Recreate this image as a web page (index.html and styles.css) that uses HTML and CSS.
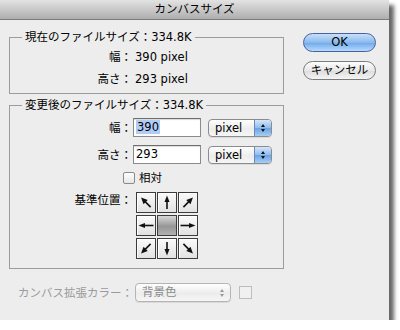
FILE: index.html
```html
<!DOCTYPE html>
<html lang="ja">
<head>
  <meta charset="utf-8">
  <title>カンバスサイズ</title>
  <link rel="stylesheet" href="styles.css">
</head>
<body>
  <div class="window">
    <div class="titlebar">カンバスサイズ</div>
    <div class="content">
      <div class="top">
        <div class="panels">
          <fieldset class="group current">
            <legend>現在のファイルサイズ：334.8K</legend>
            <div class="row"><span class="label">幅：</span><span class="value">390 pixel</span></div>
            <div class="row"><span class="label">高さ：</span><span class="value">293 pixel</span></div>
          </fieldset>
          <fieldset class="group resized">
            <legend>変更後のファイルサイズ：334.8K</legend>
            <div class="field">
              <span class="label">幅：</span>
              <div class="input"><span class="selected">390</span></div>
              <div class="select"><span>pixel</span><span class="stepper"><i class="up"></i><i class="down"></i></span></div>
            </div>
            <div class="field">
              <span class="label">高さ：</span>
              <div class="input">293</div>
              <div class="select"><span>pixel</span><span class="stepper"><i class="up"></i><i class="down"></i></span></div>
            </div>
            <div class="check"><span class="box"></span><span>相対</span></div>
            <div class="anchor">
              <span class="label">基準位置：</span>
              <div class="grid">
                <div class="cell"><svg viewBox="0 0 18 19"><g transform="rotate(-45 9 9.5)"><path d="M9 16V8" /><polygon points="9,2.5 6,9 12,9" /></g></svg></div>
                <div class="cell"><svg viewBox="0 0 18 19"><g><path d="M9 16V8" /><polygon points="9,2.5 6.5,9 11.5,9" /></g></svg></div>
                <div class="cell"><svg viewBox="0 0 18 19"><g transform="rotate(45 9 9.5)"><path d="M9 16V8" /><polygon points="9,2.5 6,9 12,9" /></g></svg></div>
                <div class="cell"><svg viewBox="0 0 18 19"><g transform="rotate(-90 9 9.5)"><path d="M9 17V8" /><polygon points="9,2 6.5,8.5 11.5,8.5" /></g></svg></div>
                <div class="cell center"></div>
                <div class="cell"><svg viewBox="0 0 18 19"><g transform="rotate(90 9 9.5)"><path d="M9 17V8" /><polygon points="9,2 6.5,8.5 11.5,8.5" /></g></svg></div>
                <div class="cell"><svg viewBox="0 0 18 19"><g transform="rotate(-135 9 9.5)"><path d="M9 16V8" /><polygon points="9,2.5 6,9 12,9" /></g></svg></div>
                <div class="cell"><svg viewBox="0 0 18 19"><g transform="rotate(180 9 9.5)"><path d="M9 16V8" /><polygon points="9,2.5 6.5,9 11.5,9" /></g></svg></div>
                <div class="cell"><svg viewBox="0 0 18 19"><g transform="rotate(135 9 9.5)"><path d="M9 16V8" /><polygon points="9,2.5 6,9 12,9" /></g></svg></div>
              </div>
            </div>
          </fieldset>
        </div>
        <div class="buttons">
          <div class="btn ok">OK</div>
          <div class="btn">キャンセル</div>
        </div>
      </div>
      <div class="extend">
        <span class="label">カンバス拡張カラー：</span>
        <div class="select disabled"><span>背景色</span><span class="stepper"><i class="up"></i><i class="down"></i></span></div>
        <span class="swatch"></span>
      </div>
    </div>
  </div>
</body>
</html>
```

FILE: styles.css
```css
/* Grundlayout */
*, *::before, *::after { box-sizing: border-box; }
body {
  margin: 0; background: #fff; color: #000;
  font: 11.5px/16px "DejaVu Sans", "Noto Sans CJK JP", sans-serif;
}
.window {
  width: 389px; height: 320px;
  background: #ededed;
  box-shadow: 5px 5px 4px rgba(0, 0, 0, .6);
  display: flex; flex-direction: column;
}
.titlebar {
  height: 20px; line-height: 19px; text-align: center;
  border-bottom: 1px solid #7c7c7c;
  background: linear-gradient(#e3e3e3, #aeaeae);
}
.content { padding: 9px 0 0 9px; }
.top { display: flex; }
.panels { width: 275px; }

/* Gruppen */
.group { margin: 0; padding: 0 0 3px; border: 1px solid #9c9c9c; min-width: 0; }
.group legend { padding: 0 3px; margin-left: 12px; }
.resized { margin-top: 3px; padding: 5px 0 9px; }
.label { width: 122px; text-align: right; flex: none; }
.row { display: flex; height: 22px; line-height: 22px; }
.current .row:first-of-type { margin-top: 1px; }
.value { margin-left: 3px; }

.field { display: flex; align-items: center; height: 19px; }
.field + .field { margin-top: 8px; }
.input {
  width: 68px; height: 19px; margin-left: 1px;
  background: #fff; border: 1px solid #8a8a8a; border-top-color: #6e6e6e;
  box-shadow: inset 0 1px 1px rgba(0, 0, 0, .15);
  padding-left: 2px; line-height: 17px;
}
.selected { background: #b0cdf8; padding: 0 1px; }

.select {
  display: flex; align-items: stretch;
  width: 64px; height: 18px; margin-left: 7px;
  border: 1px solid #8c8c8c; border-radius: 4px; overflow: hidden;
  background: linear-gradient(#fff, #ececec 55%, #f6f6f6);
  box-shadow: 0 1px 0 rgba(0, 0, 0, .08);
}
.select span:first-child { flex: 1; padding-left: 6px; line-height: 16px; }
.stepper {
  width: 17px; border-left: 1px solid #6d87b8;
  background: linear-gradient(#d4e6fb, #8fbcee 50%, #6aa2e6 51%, #a7cdf6);
  display: flex; flex-direction: column; align-items: center; justify-content: center; gap: 2px;
}
.stepper i { width: 0; height: 0; border-left: 2.5px solid transparent; border-right: 2.5px solid transparent; }
.stepper .up { border-bottom: 3px solid #111; }
.stepper .down { border-top: 3px solid #111; }

.check { display: flex; align-items: center; height: 12px; margin-top: 8px; padding-left: 113px; }
.box {
  width: 12px; height: 12px; margin-right: 4px;
  border: 1px solid #8a8a8a; border-radius: 2px;
  background: linear-gradient(#fff, #e6e6e6);
}

.anchor { display: flex; margin-top: 8px; }
.grid {
  display: grid; grid-template-columns: repeat(3, 20px); grid-auto-rows: 21px;
  column-gap: 1px; row-gap: 2px; margin-left: 4px;
}
.cell {
  border: 1px solid #3c3c3c;
  background: linear-gradient(#fafafa, #e2e2e2);
  box-shadow: inset 1px 1px 0 #fff;
}
.cell svg { display: block; width: 18px; height: 19px; }
.cell path { stroke: #111; stroke-width: 1.6; fill: none; }
.cell polygon { fill: #111; }
.cell.center { background: linear-gradient(#d8d8d8, #969696 55%, #b0b0b0); box-shadow: none; }

/* Knöpfe */
.buttons { margin: 4px 0 0 19px; display: flex; flex-direction: column; gap: 9px; }
.btn {
  width: 73px; height: 19px; border-radius: 10px;
  text-align: center; line-height: 17px;
  border: 1px solid #7b7b7b;
  background: linear-gradient(#fdfdfd, #e8e8e8 50%, #dcdcdc 51%, #f4f4f4);
}
.btn.ok {
  border-color: #4a5fa6;
  background: linear-gradient(#c9e0f8, #89b9ee 50%, #6ea8ea 51%, #b7dbfc);
}

/* untere Zeile */
.extend { display: flex; align-items: center; margin-top: 14px; padding-left: 9px; color: #9b9b9b; }
.extend .label { width: auto; text-align: left; }
.select.disabled { width: 96px; height: 19px; margin-left: 2px; border-color: #b4b4b4; color: #8a8a8a; }
.select.disabled .stepper { background: none; border-left: none; }
.select.disabled .stepper i { border-bottom-color: #9a9a9a; border-top-color: #9a9a9a; }
.swatch { width: 13px; height: 13px; margin-left: 8px; border: 1px solid #bdbdbd; background: #f0f0f0; }
```
